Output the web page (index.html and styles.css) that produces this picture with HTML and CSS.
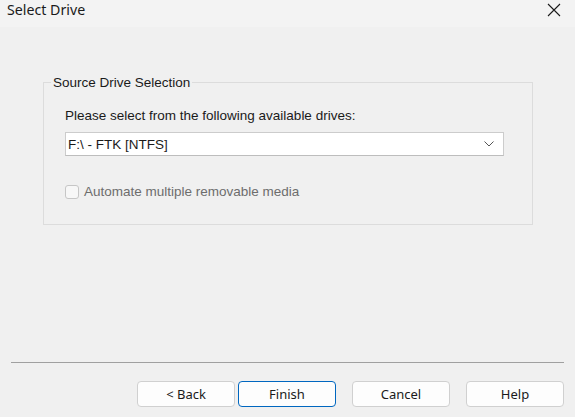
FILE: index.html
```html
<!DOCTYPE html>
<html lang="en">
<head>
    <meta charset="UTF-8">
    <title>Select Drive</title>
    <link rel="stylesheet" href="styles.css">
</head>
<body>
    <div class="window">
        <!-- Title Bar -->
        <div class="titlebar">
            <span class="title">Select Drive</span>
            <svg class="close" width="14" height="14" viewBox="0 0 14 14">
                <path d="M1 1 L13 13 M13 1 L1 13" stroke="#1a1a1a" stroke-width="1.1" fill="none"/>
            </svg>
        </div>

        <!-- Dialog Body -->
        <div class="content">
            <fieldset class="group">
                <legend>Source Drive Selection</legend>
                <div class="prompt">Please select from the following available drives:</div>
                <div class="dropdown">
                    <span>F:\ - FTK [NTFS]</span>
                    <svg width="10" height="6" viewBox="0 0 10 6">
                        <path d="M0.5 0.5 L5 5 L9.5 0.5" stroke="#555" stroke-width="1" fill="none"/>
                    </svg>
                </div>
                <label class="check disabled">
                    <span class="box"></span>
                    Automate multiple removable media
                </label>
            </fieldset>
        </div>

        <!-- Buttons -->
        <div class="footer">
            <div class="separator"></div>
            <div class="buttons">
                <button class="btn back">&lt; Back</button>
                <button class="btn primary">Finish</button>
                <button class="btn">Cancel</button>
                <button class="btn">Help</button>
            </div>
        </div>
    </div>
</body>
</html>
```

FILE: styles.css
```css
/* Global Styles */
body, html {
    margin: 0;
    padding: 0;
    background: #f0f0f0;
}

.window {
    width: 575px;
    height: 417px;
    display: flex;
    flex-direction: column;
    background: #f0f0f0;
    overflow: hidden;
}

/* Title Bar */
.titlebar {
    height: 27px;
    flex: none;
    display: flex;
    align-items: center;
    justify-content: space-between;
    background: #f3f3f3;
    padding: 0 14px 0 7px;
}

.title {
    font-family: 'Noto Sans', sans-serif;
    font-size: 14.2px;
    color: #1a1a1a;
    margin-top: -8px;
}

.close {
    margin-top: -8px;
}

/* Group Box */
.content {
    flex: 1;
    padding: 48px 43px 0 43px;
}

.group {
    margin: 0;
    width: 490px;
    height: 150px;
    box-sizing: border-box;
    border: 1px solid #dcdcdc;
    padding: 21px 21px 0 21px;
    font-family: 'Liberation Sans', Arial, sans-serif;
    font-size: 13.5px;
    color: #1a1a1a;
}

.group legend {
    padding: 0 2px;
    margin-left: -14px;
    line-height: 15px;
}

.prompt {
    line-height: 15px;
    margin-top: -3px;
}

/* Drop-down */
.dropdown {
    margin-top: 9px;
    width: 439px;
    height: 24px;
    box-sizing: border-box;
    border: 1px solid #cccccc;
    border-bottom-color: #bdbdbd;
    background: #ffffff;
    display: flex;
    align-items: center;
    justify-content: space-between;
    padding: 0 9px 0 2px;
}

/* Checkbox */
.check {
    display: flex;
    align-items: center;
    gap: 5px;
    margin-top: 28px;
    line-height: 15px;
}

.check.disabled {
    color: #6d6d6d;
}

.box {
    width: 14px;
    height: 14px;
    box-sizing: border-box;
    border: 1px solid #c6c6c6;
    border-radius: 3px;
    background: #f7f7f7;
}

/* Footer */
.footer {
    flex: none;
    padding: 0 11px 10px 11px;
}

.separator {
    height: 1px;
    background: #a0a0a0;
}

.buttons {
    display: flex;
    justify-content: flex-end;
    padding-top: 18px;
}

.btn {
    width: 98px;
    height: 26px;
    box-sizing: border-box;
    border: 1px solid #d0d0d0;
    border-radius: 4px;
    background: #fdfdfd;
    font-family: 'Noto Sans', sans-serif;
    font-size: 13px;
    color: #1a1a1a;
    padding: 0;
    margin-left: 16px;
}

.btn.back {
    margin-left: 0;
}

.btn.primary {
    margin-left: 3px;
    border-color: #0067c0;
}
```
